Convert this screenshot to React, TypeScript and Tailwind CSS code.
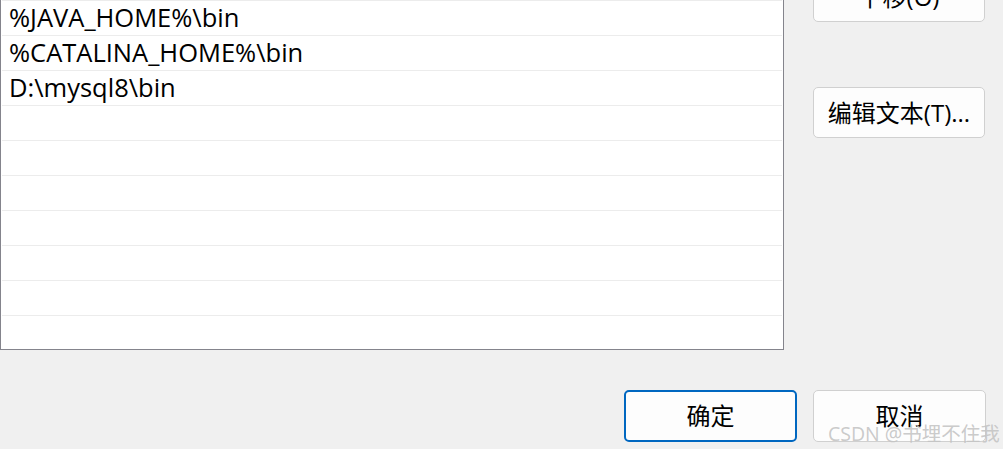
const rows = ['%JAVA_HOME%\\bin', '%CATALINA_HOME%\\bin', 'D:\\mysql8\\bin', '', '', '', '', '', '', ''];

const font = { fontFamily: '"Open Sans", "Noto Sans CJK SC", sans-serif' };

function WinButton({ label, primary = false, className = '' }: { label: string; primary?: boolean; className?: string }) {
  return (
    <button
      className={
        'flex items-center justify-center rounded-[5px] bg-[#fdfdfd] text-[24px] leading-none text-black ' +
        (primary ? 'border-2 border-[#0067c0] ' : 'border border-[#d0d0d0] ') +
        className
      }
    >
      {label}
    </button>
  );
}

export default function App() {
  return (
    <div className="relative w-[1003px] h-[449px] overflow-hidden bg-[#f0f0f0]" style={font}>
      <div className="flex items-start">
        {/* path list */}
        <div className="w-[784px] h-[350px] shrink-0 overflow-hidden bg-white border-x border-b border-[#84848c]">
          {rows.map((r, i) => (
            <div key={i} className="mx-[1px] h-[35px] border-t border-[#ececec] pl-[7px] flex items-center text-[25.5px] leading-none text-black">
              {r}
            </div>
          ))}
        </div>

        {/* side buttons */}
        <div className="ml-[29px] flex flex-col gap-[65px] -mt-[29px]">
          <WinButton label="下移(O)" className="w-[172px] h-[51px]" />
          <WinButton label="编辑文本(T)..." className="w-[172px] h-[51px]" />
        </div>
      </div>

      <div className="mt-[40px] flex justify-end gap-[16px] pr-[17px]">
        <WinButton label="确定" primary className="w-[173px] h-[52px]" />
        <WinButton label="取消" className="w-[173px] h-[52px]" />
      </div>

      <span className="absolute left-[828px] top-[419px] text-[19.5px] text-[#c4c4c4]/90 pointer-events-none">
        CSDN @书埋不住我
      </span>
    </div>
  );
}
